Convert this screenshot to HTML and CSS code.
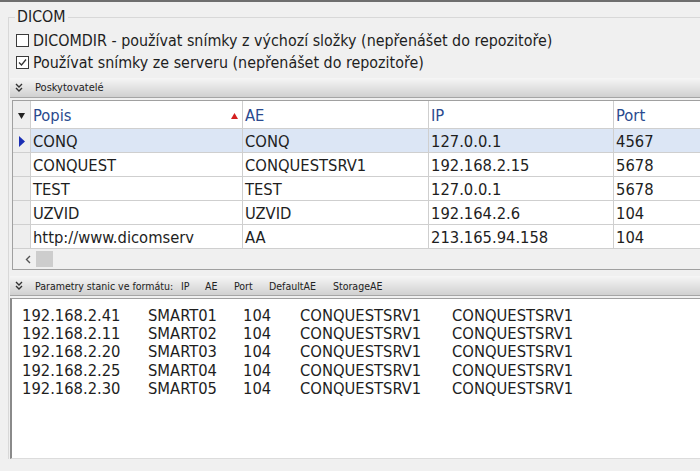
FILE: index.html
```html
<!DOCTYPE html>
<html lang="cs">
<head>
<meta charset="UTF-8" />
<title>DICOM</title>
<link rel="stylesheet" href="styles.css">
</head>
<body>

<div class="topline"></div>

<fieldset class="group">
  <legend>DICOM</legend>

  <!-- Options -->
  <div class="opts">
    <div class="opt"><span class="box"></span>DICOMDIR - používat snímky z výchozí složky (nepřenášet do repozitoře)</div>
    <div class="opt">
      <span class="box">
        <svg width="11" height="11" viewBox="0 0 11 11"><path d="M2 5.5 L4.5 8 L9 2.5" fill="none" stroke="#333" stroke-width="1.3"/></svg>
      </span>Používat snímky ze serveru (nepřenášet do repozitoře)
    </div>
  </div>

  <!-- Providers -->
  <div class="bar">
    <svg class="chev" width="8" height="9" viewBox="0 0 8 9"><path d="M1 1 L4 4 L7 1 M1 5 L4 8 L7 5" fill="none" stroke="#333" stroke-width="1.4"/></svg>
    <span>Poskytovatelé</span>
  </div>

  <div class="grid">
    <div class="row head">
      <div class="cell ind"><svg width="7" height="6" viewBox="0 0 7 6"><path d="M0 0 H7 L3.5 6 Z" fill="#222"/></svg></div>
      <div class="cell">Popis<svg class="sort" width="7" height="6" viewBox="0 0 7 6"><path d="M0 6 H7 L3.5 0 Z" fill="#d42020"/></svg></div>
      <div class="cell">AE</div>
      <div class="cell">IP</div>
      <div class="cell">Port</div>
    </div>
    <div class="row sel">
      <div class="cell ind"><svg width="6" height="11" viewBox="0 0 6 11"><path d="M0 0 L6 5.5 L0 11 Z" fill="#1b2fb4"/></svg></div>
      <div class="cell">CONQ</div>
      <div class="cell">CONQ</div>
      <div class="cell">127.0.0.1</div>
      <div class="cell">4567</div>
    </div>
    <div class="row">
      <div class="cell ind"></div>
      <div class="cell">CONQUEST</div>
      <div class="cell">CONQUESTSRV1</div>
      <div class="cell">192.168.2.15</div>
      <div class="cell">5678</div>
    </div>
    <div class="row">
      <div class="cell ind"></div>
      <div class="cell">TEST</div>
      <div class="cell">TEST</div>
      <div class="cell">127.0.0.1</div>
      <div class="cell">5678</div>
    </div>
    <div class="row">
      <div class="cell ind"></div>
      <div class="cell">UZVID</div>
      <div class="cell">UZVID</div>
      <div class="cell">192.164.2.6</div>
      <div class="cell">104</div>
    </div>
    <div class="row">
      <div class="cell ind"></div>
      <div class="cell">http://www.dicomserv</div>
      <div class="cell">AA</div>
      <div class="cell">213.165.94.158</div>
      <div class="cell">104</div>
    </div>
    <div class="hscroll">
      <svg width="6" height="9" viewBox="0 0 6 9"><path d="M5 1 L1.5 4.5 L5 8" fill="none" stroke="#555" stroke-width="1.4"/></svg>
      <span class="thumb"></span>
    </div>
  </div>

  <!-- Stations -->
  <div class="bar bar2">
    <svg class="chev" width="8" height="9" viewBox="0 0 8 9"><path d="M1 1 L4 4 L7 1 M1 5 L4 8 L7 5" fill="none" stroke="#333" stroke-width="1.4"/></svg>
    <span class="lbl">Parametry stanic ve formátu:</span>
    <span class="fld f-ip">IP</span>
    <span class="fld f-ae">AE</span>
    <span class="fld f-port">Port</span>
    <span class="fld f-def">DefaultAE</span>
    <span class="fld">StorageAE</span>
  </div>

  <div class="memo">
    <div class="line"><span>192.168.2.41</span><span>SMART01</span><span>104</span><span>CONQUESTSRV1</span><span>CONQUESTSRV1</span></div>
    <div class="line"><span>192.168.2.11</span><span>SMART02</span><span>104</span><span>CONQUESTSRV1</span><span>CONQUESTSRV1</span></div>
    <div class="line"><span>192.168.2.20</span><span>SMART03</span><span>104</span><span>CONQUESTSRV1</span><span>CONQUESTSRV1</span></div>
    <div class="line"><span>192.168.2.25</span><span>SMART04</span><span>104</span><span>CONQUESTSRV1</span><span>CONQUESTSRV1</span></div>
    <div class="line"><span>192.168.2.30</span><span>SMART05</span><span>104</span><span>CONQUESTSRV1</span><span>CONQUESTSRV1</span></div>
  </div>
</fieldset>

</body>
</html>
```

FILE: styles.css
```css
body {
  margin: 0;
  background: #f0f0f0;
  font-family: "DejaVu Sans Condensed", "Liberation Sans", Arial, sans-serif;
  color: #1e1e1e;
  overflow: hidden;
}
.topline {
  height: 2px;
  background: #6e6e6e;
}

/* Group box */
.group {
  margin: 6px 0 0 8px;
  padding: 0;
  border: 1px solid #d8d8d8;
  border-right: none;
  border-bottom: none;
  min-width: 0;
}
.group legend {
  margin-left: 6px;
  padding: 0 2px;
  font-size: 15.8px;
  line-height: 18px;
}
.opts {
  padding-top: 3px;
}
.opt {
  display: flex;
  align-items: center;
  height: 22px;
  padding-left: 7px;
  font-size: 15.9px;
  white-space: nowrap;
}
.box {
  width: 11px; height: 11px;
  border: 1px solid #3a3a3a;
  background: #fff;
  margin-right: 4px;
  display: flex;
}

/* Panel headers */
.bar {
  margin: 5px 0 0 1px;
  height: 19px;
  display: flex;
  align-items: center;
  padding-left: 5px;
  background: linear-gradient(#f6f6f6, #d0d0d0);
  border-bottom: 1px solid #a5a5a5;
  font-size: 11px;
  color: #222;
  white-space: nowrap;
}
.bar .chev {
  margin-right: 12px;
}
.bar2 {
  margin-top: 6px;
  font-size: 10.5px;
}
.bar2 .lbl { width: 146px; }
.bar2 .f-ip { width: 24px; }
.bar2 .f-ae { width: 29px; }
.bar2 .f-port { width: 35px; }
.bar2 .f-def { width: 64px; }

/* Grid */
.grid {
  margin: 2px 0 0 3px;
  border: 1px solid #a0a0a0;
  border-right: none;
  background: #fff;
  overflow: hidden;
}
.row {
  display: grid;
  grid-template-columns: 18px 212px 186px 185px 120px;
  height: 24px;
  border-bottom: 1px solid #cfcfcf;
  box-sizing: border-box;
  font-size: 16.4px;
}
.row.head {
  height: 28px;
  color: #2a4a8f;
}
.row.sel .cell {
  background: #dce6f5;
}
.cell {
  display: flex;
  align-items: center;
  padding: 2px 0 0 2px;
  border-right: 1px solid #cfcfcf;
  white-space: nowrap;
  overflow: hidden;
}
.row .cell.ind {
  background: #eeeeee;
  padding-left: 0;
  justify-content: center;
}
.sort {
  margin-left: auto;
  margin-right: 4px;
}
.hscroll {
  height: 20px;
  display: flex;
  align-items: center;
  padding-left: 12px;
  background: #f0f0f0;
}
.thumb {
  width: 17px; height: 16px;
  margin-left: 5px;
  background: #cdcdcd;
}

/* Memo */
.memo {
  margin: 2px 0 0 1px;
  height: 161px;
  box-sizing: border-box;
  border: 1px solid #a0a0a0;
  border-right: none;
  border-bottom-color: #dcdcdc;
  border-left: 2px solid #8a8a8a;
  background: #fff;
  padding: 8px 0 0 10px;
  font-size: 16.4px;
  line-height: 18.2px;
}
.line {
  display: grid;
  grid-template-columns: 126px 95px 57px 152px auto;
}
```
